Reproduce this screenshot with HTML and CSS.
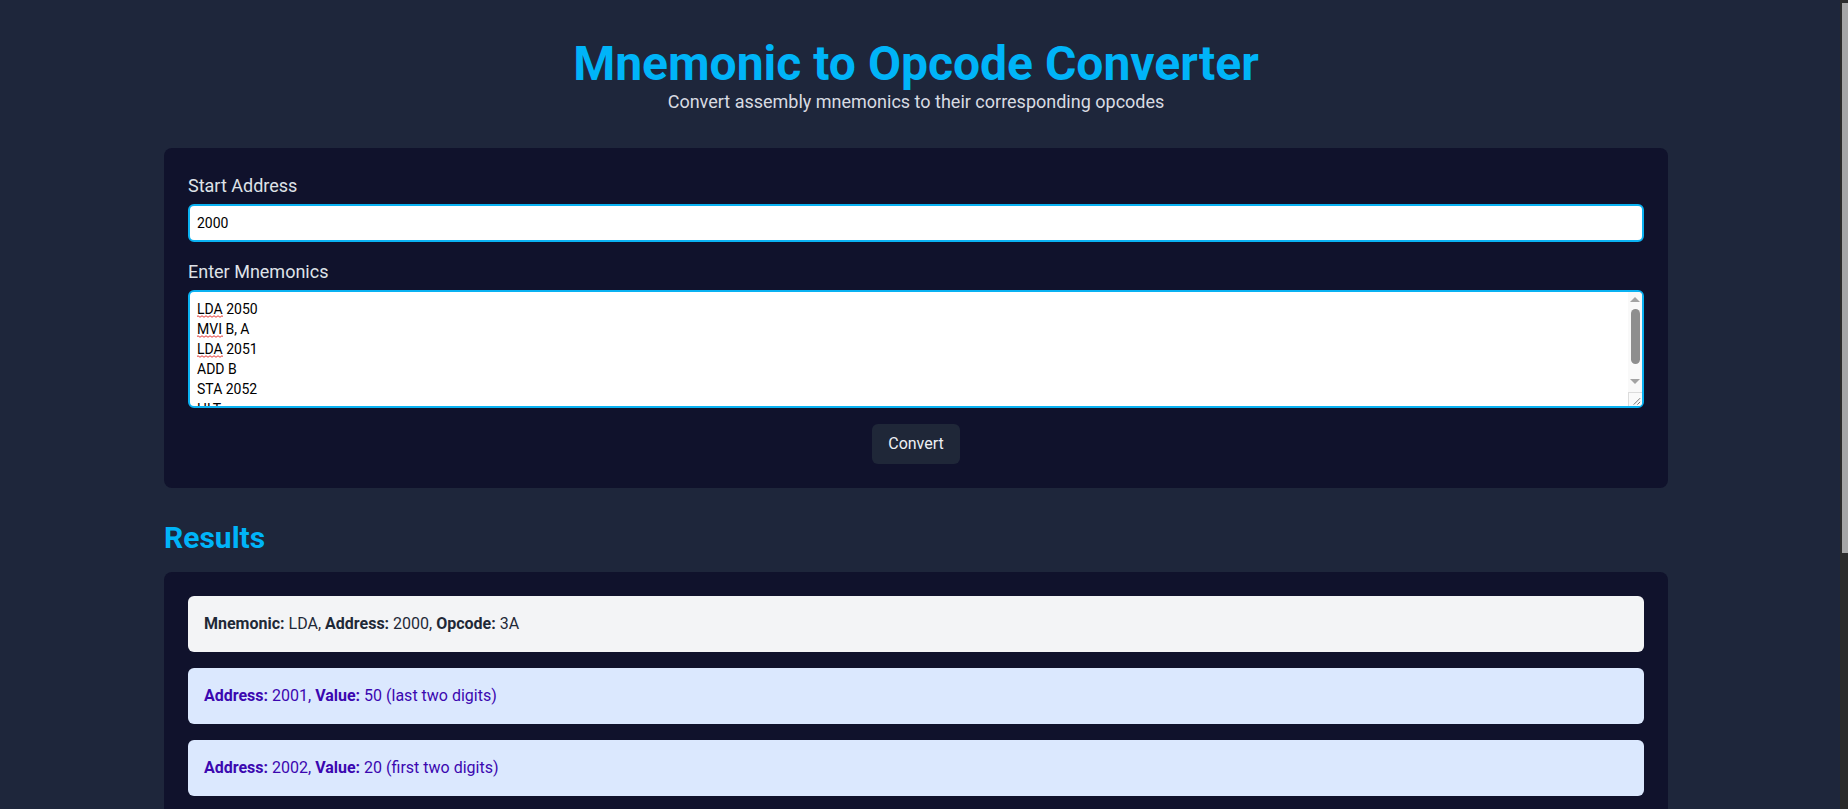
FILE: index.html
```html
<!DOCTYPE html>
<html lang="en">
<head>
<meta charset="UTF-8">
<title>Mnemonic to Opcode Converter</title>
<link rel="stylesheet" href="styles.css">
</head>
<body>
<div class="page">
  <header class="header">
    <h1 class="title">Mnemonic to Opcode Converter</h1>
    <p class="subtitle">Convert assembly mnemonics to their corresponding opcodes</p>
  </header>

  <section class="card form-card">
    <label class="label" for="start">Start Address</label>
    <input id="start" class="field input" type="text" value="2000">
    <label class="label" for="mn">Enter Mnemonics</label>
    <div class="ta-wrap">
      <textarea id="mn" class="field textarea" rows="5" spellcheck="false">LDA 2050
MVI B, A
LDA 2051
ADD B
STA 2052
HLT</textarea>
      <svg class="spell" width="30" height="48" viewBox="0 0 30 48" aria-hidden="true">
        <path d="M0 1.5 Q1 0 2 1.5 T4 1.5 T6 1.5 T8 1.5 T10 1.5 T12 1.5 T14 1.5 T16 1.5 T18 1.5 T20 1.5 T22 1.5 T24 1.5 T26 1.5" stroke="#e53935" stroke-width="1" fill="none"/>
        <path d="M0 21.5 Q1 20 2 21.5 T4 21.5 T6 21.5 T8 21.5 T10 21.5 T12 21.5 T14 21.5 T16 21.5 T18 21.5 T20 21.5 T22 21.5 T24 21.5 T26 21.5" stroke="#e53935" stroke-width="1" fill="none"/>
        <path d="M0 41.5 Q1 40 2 41.5 T4 41.5 T6 41.5 T8 41.5 T10 41.5 T12 41.5 T14 41.5 T16 41.5 T18 41.5 T20 41.5 T22 41.5 T24 41.5 T26 41.5" stroke="#e53935" stroke-width="1" fill="none"/>
      </svg>
      <div class="ta-scroll" aria-hidden="true">
        <span class="arrow-up"></span>
        <span class="ta-thumb"></span>
        <span class="arrow-down"></span>
        <span class="resizer">
          <svg width="14" height="14" viewBox="0 0 14 14"><path d="M12 5 L5 12 M12 9 L9 12" stroke="#6b6b6b" stroke-width="1" fill="none"/></svg>
        </span>
      </div>
    </div>
    <div class="actions">
      <button class="btn" type="button">Convert</button>
    </div>
  </section>

  <h2 class="results-title">Results</h2>

  <section class="card results-card">
    <div class="item item-op"><b>Mnemonic:</b> LDA, <b>Address:</b> 2000, <b>Opcode:</b> 3A</div>
    <div class="item item-val"><b>Address:</b> 2001, <b>Value:</b> 50 (last two digits)</div>
    <div class="item item-val"><b>Address:</b> 2002, <b>Value:</b> 20 (first two digits)</div>
    <div class="item item-op"><b>Mnemonic:</b> MVI, <b>Address:</b> 2003, <b>Opcode:</b> 06</div>
    <div class="item item-val"><b>Address:</b> 2004, <b>Value:</b> A</div>
    <div class="item item-op"><b>Mnemonic:</b> LDA, <b>Address:</b> 2005, <b>Opcode:</b> 3A</div>
    <div class="item item-val"><b>Address:</b> 2006, <b>Value:</b> 51 (last two digits)</div>
    <div class="item item-val"><b>Address:</b> 2007, <b>Value:</b> 20 (first two digits)</div>
  </section>
</div>
<div class="page-scroll" aria-hidden="true"><span class="page-thumb"></span></div>
</body>
</html>
```

FILE: styles.css
```css
* {
  box-sizing: border-box;
}

html, body {
  margin: 0;
  padding: 0;
}

body {
  background: #1e263b;
  font-family: Roboto, "Liberation Sans", sans-serif;
  color: #e5e7eb;
  padding-right: 16px;
}

.page {
  max-width: 1536px;
  margin: 0 auto;
  padding: 40px 16px 32px;
}

.header {
  text-align: center;
  margin-bottom: 32px;
}

.title {
  margin: 0;
  font-size: 48px;
  line-height: 48px;
  font-weight: 700;
  color: #00b4f8;
}

.subtitle {
  margin: 0;
  font-size: 18px;
  line-height: 28px;
  color: #d8dbe2;
}

.card {
  background: #10122c;
  border-radius: 8px;
  padding: 24px;
}

.form-card {
  display: flex;
  flex-direction: column;
}

.label {
  display: block;
  font-size: 18px;
  line-height: 28px;
  color: #dfe2e8;
  margin-bottom: 4px;
}

.field {
  display: block;
  width: 100%;
  background: #ffffff;
  color: #000000;
  border: 2px solid #0ab2f2;
  border-radius: 6px;
  padding: 7px;
  font-family: Roboto, "Liberation Sans", sans-serif;
  font-size: 14px;
  line-height: 20px;
  outline: none;
}

.input {
  height: 38px;
  margin-bottom: 16px;
}

.ta-wrap {
  position: relative;
}

.textarea {
  height: 118px;
  resize: none;
  overflow: hidden;
  margin: 0;
  padding-right: 24px;
}

.spell {
  position: absolute;
  left: 9px;
  top: 25px;
  pointer-events: none;
}

.ta-scroll {
  position: absolute;
  top: 2px;
  right: 2px;
  bottom: 2px;
  width: 14px;
  background: #f9f9f9;
  border-top-right-radius: 4px;
  border-bottom-right-radius: 4px;
  pointer-events: none;
}

.arrow-up {
  position: absolute;
  top: 5px;
  left: 2px;
  width: 0;
  height: 0;
  border-left: 5px solid transparent;
  border-right: 5px solid transparent;
  border-bottom: 5px solid #a3a3a3;
}

.arrow-down {
  position: absolute;
  top: 87px;
  left: 2px;
  width: 0;
  height: 0;
  border-left: 5px solid transparent;
  border-right: 5px solid transparent;
  border-top: 5px solid #a3a3a3;
}

.ta-thumb {
  position: absolute;
  top: 17px;
  left: 3px;
  width: 9px;
  height: 55px;
  border-radius: 5px;
  background: #8e8e8e;
}

.resizer {
  position: absolute;
  left: 0;
  bottom: 0;
  width: 14px;
  height: 14px;
  background: #fafafa;
  border-top: 1px solid #dcdcdc;
  border-left: 1px solid #dcdcdc;
  border-bottom-right-radius: 4px;
  display: flex;
}

.resizer svg {
  display: block;
}

.actions {
  display: flex;
  justify-content: center;
  margin-top: 16px;
}

.btn {
  background: #1f2738;
  color: #eef0f4;
  border: none;
  border-radius: 6px;
  padding: 8px 16px;
  font-family: Roboto, "Liberation Sans", sans-serif;
  font-size: 16px;
  line-height: 24px;
  cursor: pointer;
}

.results-title {
  margin: 32px 0 16px;
  font-size: 30px;
  line-height: 36px;
  font-weight: 700;
  color: #00b4f8;
}

.results-card {
  display: flex;
  flex-direction: column;
  gap: 16px;
}

.item {
  border-radius: 6px;
  padding: 16px;
  font-size: 16px;
  line-height: 24px;
}

.item b {
  font-weight: 700;
}

.item-op {
  background: #f3f4f6;
  color: #1f2937;
}

.item-val {
  background: #dbe8fe;
  color: #3b07b0;
}

.page-scroll {
  position: fixed;
  top: 0;
  right: 0;
  bottom: 0;
  width: 8px;
  background: #2b2b2b;
}

.page-thumb {
  position: absolute;
  top: 3px;
  left: 2px;
  right: 0;
  height: 550px;
  background: #a6a6a6;
}
```
